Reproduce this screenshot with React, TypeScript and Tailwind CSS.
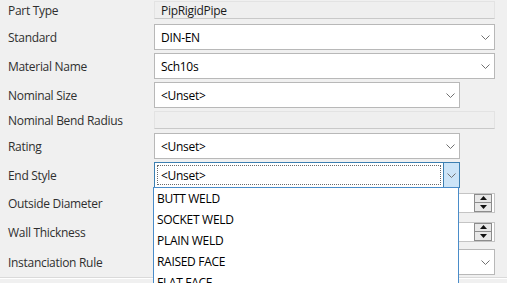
const font = { fontFamily: '"Open Sans", "Noto Sans", sans-serif' };

const Chevron = () => (
  <svg width="9" height="5" viewBox="0 0 9 5" fill="none">
    <path d="M0.5 0.5L4.5 4.5L8.5 0.5" stroke="#707070" strokeWidth="1" />
  </svg>
);

const Label = ({ children }: { children: React.ReactNode }) => (
  <div className="w-[154px] shrink-0 pl-2 pt-[2px] text-[12px] tracking-[-0.3px] text-[#2f2f2f]">{children}</div>
);

type ComboProps = { value?: string; wide?: boolean };

const Combo = ({ value, wide }: ComboProps) => (
  <div
    className={`flex h-[26px] items-center border border-[#b8b8b8] bg-white ${wide ? "w-[341px]" : "w-[306px]"}`}
  >
    <span className="flex-1 pl-[6px] pt-px text-[12px] tracking-[-0.3px] text-black">{value}</span>
    <span className="flex w-[17px] justify-center">
      <Chevron />
    </span>
  </div>
);

const ReadOnly = ({ value }: { value?: string }) => (
  <div className="flex h-[18px] w-[341px] items-center border border-[#e3e3e3] border-b-[#c9c9c9] bg-[#efefef] pl-[6px] pt-px text-[12px] tracking-[-0.3px] text-[#1a1a1a]">
    {value}
  </div>
);

const Spinner = () => (
  <div className="flex h-[20px] w-[341px] items-center justify-end border border-[#c4c4c4] bg-white pr-[2px]">
    <div className="flex h-[18px] w-[18px] flex-col gap-px border border-[#8c8c8c] bg-[#8c8c8c]">
      <div className="flex flex-1 items-center justify-center bg-[#e8e8e8]">
        <svg width="7" height="4" viewBox="0 0 7 4">
          <path d="M3.5 0L7 4H0Z" fill="#111" />
        </svg>
      </div>
      <div className="flex flex-1 items-center justify-center bg-[#e8e8e8]">
        <svg width="7" height="4" viewBox="0 0 7 4">
          <path d="M0 0H7L3.5 4Z" fill="#111" />
        </svg>
      </div>
    </div>
  </div>
);

const items = ["BUTT WELD", "SOCKET WELD", "PLAIN WELD", "RAISED FACE", "FLAT FACE"];

export default function App() {
  return (
    <div className="relative h-[283px] w-[507px] overflow-hidden bg-[#f0f0f0]" style={font}>
      <div className="flex flex-col">
        <div className="mt-[1px] flex h-[18px] items-center">
          <Label>Part Type</Label>
          <ReadOnly value="PipRigidPipe" />
        </div>
        <div className="mt-[5px] flex h-[26px] items-center">
          <Label>Standard</Label>
          <Combo value="DIN-EN" wide />
        </div>
        <div className="mt-[3px] flex h-[26px] items-center">
          <Label>Material Name</Label>
          <Combo value="Sch10s" wide />
        </div>
        <div className="mt-[3px] flex h-[26px] items-center">
          <Label>Nominal Size</Label>
          <Combo value="<Unset>" />
        </div>
        <div className="mt-[3px] flex h-[18px] items-center">
          <Label>Nominal Bend Radius</Label>
          <ReadOnly />
        </div>
        <div className="mt-[4px] flex h-[26px] items-center">
          <Label>Rating</Label>
          <Combo value="<Unset>" />
        </div>
        <div className="mt-[3px] flex h-[26px] items-center">
          <Label>End Style</Label>
          <div className="flex h-[26px] w-[306px] border border-[#3c7fb1] bg-white">
            <div className="m-[2px] flex flex-1 items-center border border-dotted border-[#6a6a6a] pl-[3px] pt-px text-[12px] tracking-[-0.3px] text-black">
              &lt;Unset&gt;
            </div>
            <div className="flex w-[16px] items-center justify-center border-l border-[#3c7fb1] bg-[#cce4f7]">
              <Chevron />
            </div>
          </div>
        </div>
        <div className="mt-[4px] flex h-[21px] items-center">
          <Label>Outside Diameter</Label>
          <Spinner />
        </div>
        <div className="mt-[8px] flex h-[21px] items-center">
          <Label>Wall Thickness</Label>
          <Spinner />
        </div>
        <div className="mt-[7px] flex h-[26px] items-center">
          <Label>Instanciation Rule</Label>
          <Combo wide />
        </div>
        <div className="mt-[2px] h-px w-full bg-[#dadada]" />
        <div className="h-px w-full bg-white" />
      </div>

      <div className="absolute left-[153px] top-[187px] w-[306px] border border-[#4a8cc9] bg-white">
        {items.map((it) => (
          <div key={it} className="flex h-[21px] items-center pl-[3px] pt-px text-[12px] tracking-[-0.3px] text-black">
            {it}
          </div>
        ))}
      </div>
    </div>
  );
}
